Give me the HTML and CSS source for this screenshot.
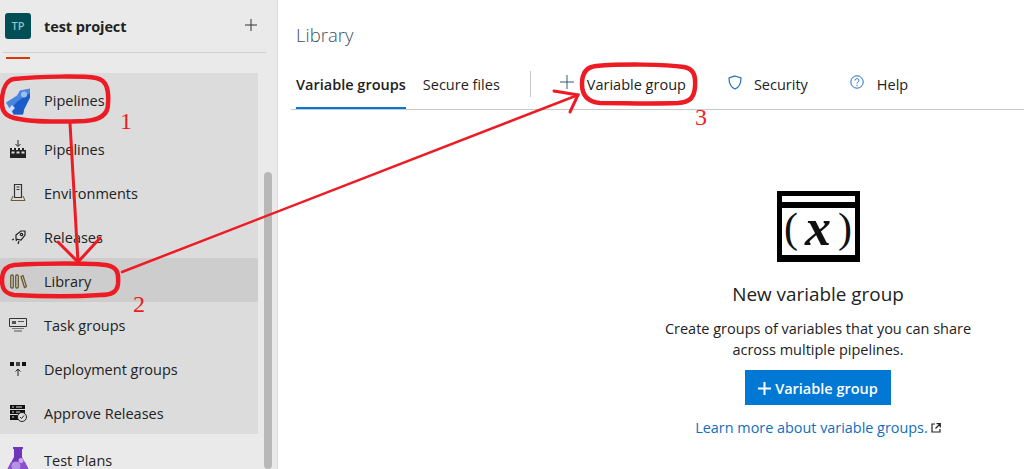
FILE: index.html
```html
<!DOCTYPE html>
<html lang="en">
<head>
  <meta charset="UTF-8">
  <title>Library</title>
  <link rel="stylesheet" href="styles.css">
</head>
<body>
  <div class="sidebar">
    <div class="project">
      <div class="avatar">TP</div>
      <div class="project-name">test project</div>
      <svg class="project-add" width="14" height="14" viewBox="0 0 14 14"><path d="M7 1v12M1 7h12" stroke="#333" stroke-width="1" fill="none"/></svg>
    </div>
    <div class="side-body">
      <div class="side-nav">
        <div class="boards-sliver"></div>
        <div class="group">
          <div class="row row-head">
            <span class="row-icon">
              <svg width="28" height="28" viewBox="0 0 28 28"><path d="M2 15.500 13 8.500 16 3.500 26 1.500V10.500L20 22.500 19 27.500H9z" fill="#4a86e0"/><path d="M14 14 26 6V10.500L20 22.500 19 27.500H9L8 20z" fill="#1c5cc8"/><circle cx="20" cy="7.500" r="3" fill="#9cc0ee"/><path d="M2 27.500V19L5 21.500 8 18 11 21 7.500 24.500 10 27.500z" fill="#cfe0f8"/></svg>
            </span>
            <span>Pipelines</span>
          </div>
          <div class="row">
            <span class="row-icon">
              <svg width="18" height="18" viewBox="0 0 18 18"><path d="M9 0v6M6.500 4 9 6.500 11.500 4" stroke="#222" fill="none"/><path d="M1 8h2v2h2V8h2v2h2V8h2v2h2V8h2v2h2v8H1z" fill="#222"/><path d="M2.500 11.500h3v2h-3zM7.500 11.500h3v2h-3zM12.500 11.500h3v2h-3z" fill="#ddd"/></svg>
            </span>
            <span>Pipelines</span>
          </div>
          <div class="row">
            <span class="row-icon">
              <svg width="16" height="18" viewBox="0 0 16 18" fill="none" stroke="#333"><path d="M4.500.500h7v13h-7zM6.500 3h3M6.500 5.500h3" stroke-width="1.200"/><path d="M3 12 1 16.500h14L13 12" stroke="#6b5a32"/></svg>
            </span>
            <span>Environments</span>
          </div>
          <div class="row">
            <span class="row-icon">
              <svg width="15" height="15" viewBox="0 0 15 15" fill="none" stroke="#222" stroke-width="1.200"><path d="M5 5 10 1h4v4l-4 5-5-1zM6 9l-1 2M3 9l-2 1M8 11l-1 3"/><circle cx="10.500" cy="4.500" r="1.200"/></svg>
            </span>
            <span>Releases</span>
          </div>
          <div class="row row-active">
            <span class="row-icon">
              <svg width="17" height="15" viewBox="0 0 17 15" fill="none" stroke="#6b5a32" stroke-width="1.300"><rect x=".7" y="1" width="2.600" height="13" rx="1.200"/><rect x="5.700" y="1" width="2.600" height="13" rx="1.200"/><path d="M11 2.500 13 1.600 16.500 12.500 14.500 13.500z"/></svg>
            </span>
            <span>Library</span>
          </div>
          <div class="row">
            <span class="row-icon">
              <svg width="18" height="14" viewBox="0 0 18 14"><path d="M.5.500h17v8H.5z" fill="none" stroke="#333"/><path d="M3 3h4v3H3zM9 3h6v1H9z" fill="#555"/><path d="M3 10h12v1H3z" fill="#777"/><path d="M5 12h8v2H5z" fill="#999"/></svg>
            </span>
            <span>Task groups</span>
          </div>
          <div class="row">
            <span class="row-icon">
              <svg width="16" height="14" viewBox="0 0 16 14"><path d="M0 0h4v4H0z" fill="#111"/><path d="M6 0h4v4H6z" fill="#444"/><path d="M12 0h4v4h-4z" fill="#111"/><path d="M8 14V7M5.500 9.500 8 7l2.500 2.500" stroke="#222" fill="none"/></svg>
            </span>
            <span>Deployment groups</span>
          </div>
          <div class="row">
            <span class="row-icon">
              <svg width="18" height="17" viewBox="0 0 18 17"><path d="M1 0h15v4H1zM1 5h15v4H1zM1 10h9v5H1z" fill="#111"/><path d="M3 2h2M7 2h6M3 7h2M7 7h4M3 12h2" stroke="#ddd"/><circle cx="13" cy="12" r="4.500" fill="#ddd" stroke="#222"/><path d="M11 12l1.500 1.500 2.500-3" stroke="#222" fill="none"/></svg>
            </span>
            <span>Approve Releases</span>
          </div>
        </div>
        <div class="row row-plans">
          <span class="row-icon">
            <svg width="28" height="28" viewBox="0 0 28 28"><path d="M9 0h10v2h-1v8l9 17H1l9-17V2H9z" fill="#6f35b8"/><path d="M7 15h14l6 12H1z" fill="#8a50cf"/><circle cx="12" cy="19" r="4.500" fill="#b592e6"/><circle cx="17" cy="13.500" r="2.500" fill="#c9a9ec"/></svg>
          </span>
          <span class="plans-label">Test Plans</span>
        </div>
      </div>
      <div class="rail"><div class="thumb"></div></div>
    </div>
  </div>

  <div class="main">
    <div class="page-title">Library</div>
    <div class="tabbar">
      <div class="tab tab-selected">Variable groups</div>
      <div class="tab">Secure files</div>
      <div class="tab-sep"></div>
      <div class="cmd cmd-add">
        <svg width="14" height="14" viewBox="0 0 14 14"><path d="M7 0v14M0 7h14" stroke="#34597a" stroke-width="1" fill="none"/></svg>
        <span>Variable group</span>
      </div>
      <div class="cmd cmd-security">
        <svg width="14" height="15" viewBox="0 0 14 15"><path d="M7 1 13 3c0 5-1 9-6 11C2 12 1 8 1 3z" fill="none" stroke="#1f6fb5" stroke-width="1.200"/></svg>
        <span>Security</span>
      </div>
      <div class="cmd cmd-help">
        <svg width="14" height="14" viewBox="0 0 14 14" fill="none" stroke="#1f6fb5"><circle cx="7" cy="7" r="6.200"/><path d="M5 5.500C5 3 9 3 9 5.500 9 7 7 7 7 8.500M7 9.800v1.200"/></svg>
        <span>Help</span>
      </div>
    </div>

    <div class="empty">
      <div class="var-icon">
        <div class="var-icon-bar"></div>
        <div class="var-icon-body"><span class="paren">(</span><span class="var-x">x</span><span class="paren">)</span></div>
      </div>
      <div class="empty-title">New variable group</div>
      <div class="empty-text">Create groups of variables that you can share<br>across multiple pipelines.</div>
      <div class="primary-btn">
        <svg width="13" height="13" viewBox="0 0 13 13"><path d="M6.500 0v13M0 6.500h13" stroke="#fff" stroke-width="2" fill="none"/></svg>
        <span>Variable group</span>
      </div>
      <div class="learn">
        <span>Learn more about variable groups.</span>
        <svg width="10" height="10" viewBox="0 0 10 10" fill="none" stroke="#222" stroke-width="1.200"><path d="M4 1H1v8h8V6M5.500.7h3.800v3.800M9 1 4.500 5.500"/></svg>
      </div>
    </div>
  </div>

  <!-- red hand drawn notes on top of the screenshot -->
  <svg class="notes" width="1024" height="469" viewBox="0 0 1024 469" fill="none" stroke="#ed1c24" stroke-linecap="round">
    <path d="M14 79C40 76 85 76 96 78 107 80 109 90 108 104 108 115 100 120 85 121 60 122 30 122 14 118 3 115 1 108 2 98 3 88 7 80 14 79z" stroke-width="4.500"/>
    <path d="M14 265C45 263 90 263 106 265 117 267 119 272 118 284 117 292 112 295 100 295 70 297 35 296 14 295 4 293 2 288 2 280 2 271 6 266 14 265z" stroke-width="4.500"/>
    <path d="M596 66C620 64 665 64 684 67 693 69 696 74 695 87 694 98 690 102 678 103 650 104 625 103 600 103 588 102 582 96 582 84 582 74 586 67 596 66z" stroke-width="4.500"/>
    <path d="M70 123 78 262M58 242 78 262 100 238" stroke-width="3"/>
    <path d="M122 272 578 95" stroke-width="2.500"/>
    <path d="M554 91 578 95 570 112" stroke-width="3"/>
  </svg>
  <span class="note-num note-1">1</span>
  <span class="note-num note-2">2</span>
  <span class="note-num note-3">3</span>
</body>
</html>
```

FILE: styles.css
```css
* {
  box-sizing: border-box;
}
html, body {
  margin: 0;
  height: 469px;
  overflow: hidden;
}
body {
  display: flex;
  font-family: "Open Sans", "Noto Sans", sans-serif;
  font-size: 14.5px;
  color: #222;
  background-color: #fff;
}

/* left side */
.sidebar {
  width: 278px;
  height: 469px;
  flex-shrink: 0;
  overflow: hidden;
  background-color: #eaeaea;
  border-right: 1px solid #dedede;
}
.project {
  display: flex;
  align-items: center;
  height: 53px;
  margin-right: 11px;
  margin-left: 3px;
  padding-left: 2px;
  border-bottom: 1px solid #d0d0d0;
}
.avatar {
  width: 26px;
  height: 26px;
  border-radius: 3px;
  margin-right: 13px;
  background-color: #004e56;
  color: #8fc3c7;
  font-size: 11px;
  font-weight: 600;
  line-height: 26px;
  text-align: center;
}
.project-name {
  flex: 1;
  font-weight: 700;
  letter-spacing: -0.1px;
}
.project-add {
  margin-right: 8px;
  margin-bottom: 3px;
}
.side-body {
  display: flex;
  height: 416px;
  overflow: hidden;
}
.side-nav {
  width: 258px;
}
.boards-sliver {
  width: 24px;
  height: 2px;
  margin: 4px 0 14px 6px;
  background-color: #d83b01;
}
.group {
  background-color: #dcdcdc;
}
.row {
  display: flex;
  align-items: center;
  height: 44px;
  padding-top: 2px;
}
.row-head {
  height: 53px;
}
.row-active {
  background-color: #cdcdcd;
  border-radius: 2px;
}
.row-plans {
  height: 54px;
  padding-top: 0;
}
.plans-label {
  line-height: 16px;
}
.row-icon {
  display: flex;
  justify-content: center;
  width: 36px;
  margin-right: 8px;
}
.rail {
  width: 19px;
}
.thumb {
  width: 8px;
  height: 297px;
  margin-top: 119px;
  margin-left: 6px;
  border-radius: 4px;
  background-color: #b8b8b8;
}

/* right side */
.main {
  flex: 1;
  padding-left: 13px;
}
.page-title {
  padding: 22px 0 0 5px;
  height: 58px;
  font-size: 18.500px;
  font-weight: 300;
  color: #3f4e5c;
}
.tabbar {
  display: flex;
  align-items: center;
  height: 52px;
  padding-top: 2px;
  padding-left: 5px;
  border-bottom: 1px solid #c8c8c8;
}
.tab {
  display: flex;
  align-items: center;
  height: 100%;
  margin-right: 18px;
}
.tab-selected {
  margin-right: 17px;
  font-weight: 600;
  box-shadow: inset 0 -2px 0 #0078d4;
}
.tab-sep {
  width: 1px;
  height: 26px;
  margin: 0 29px 2px 12px;
  background-color: #c8c8c8;
}
.cmd {
  display: flex;
  align-items: center;
}
.cmd-add svg {
  margin-right: 13px;
  margin-bottom: 6px;
}
.cmd-security {
  margin-left: 42px;
}
.cmd-security svg {
  margin-right: 12px;
  margin-bottom: 4px;
}
.cmd-help {
  margin-left: 42px;
}
.cmd-help svg {
  margin-right: 13px;
  margin-bottom: 5px;
}
.empty {
  display: flex;
  flex-direction: column;
  align-items: center;
  margin-top: 81px;
  margin-left: 321px;
}
.var-icon {
  width: 83px;
  height: 71px;
  border: 5px solid #000;
  border-bottom-width: 7px;
}
.var-icon-bar {
  height: 6px;
  background-color: #fff;
}
.var-icon-body {
  display: flex;
  justify-content: center;
  align-items: center;
  height: 53px;
  padding-bottom: 7px;
  border-top: 6px solid #000;
  font-family: "Liberation Serif", serif;
  color: #111;
}
.paren {
  font-size: 42px;
  line-height: 40px;
}
.var-x {
  margin: 0 7px;
  font-size: 52px;
  line-height: 40px;
  font-style: italic;
  font-weight: 700;
}
.empty-title {
  margin-top: 18px;
  font-size: 18.900px;
  line-height: 28px;
}
.empty-text {
  margin-top: 10px;
  line-height: 21px;
  text-align: center;
}
.primary-btn {
  display: flex;
  align-items: center;
  justify-content: center;
  gap: 4px;
  width: 146px;
  height: 35px;
  margin-top: 10px;
  padding-top: 1px;
  background-color: #0078d4;
  color: #fff;
  font-weight: 600;
}
.learn {
  display: flex;
  align-items: center;
  gap: 3px;
  margin-top: 13px;
  font-size: 14.400px;
  color: #106ebe;
}

/* notes */
.notes {
  position: absolute;
  left: 0;
  top: 0;
}
.note-num {
  position: absolute;
  font-family: "Liberation Serif", serif;
  font-size: 24px;
  line-height: 24px;
  color: #ed1c24;
}
.note-1 {
  left: 120px;
  top: 109px;
}
.note-2 {
  left: 133px;
  top: 292px;
}
.note-3 {
  left: 695px;
  top: 105px;
}
```
